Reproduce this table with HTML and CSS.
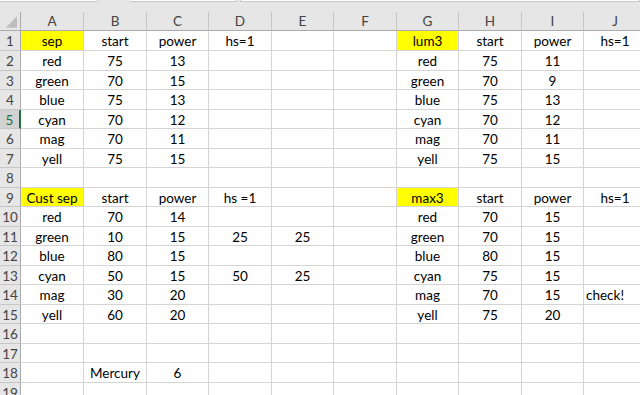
FILE: index.html
```html
<!DOCTYPE html>
<html>
<head>
<meta charset="utf-8">
<link rel="stylesheet" href="styles.css">
</head>
<body>
<div class="topstrip">
  <div class="fbox b1"></div>
  <div class="fbox b2"></div>
  <div class="fbox b3"></div>
</div>
<div class="sheet">
  <div class="corner"><svg width="21" height="19" viewBox="0 0 21 19"><polygon points="18,4 18,16 6,16" fill="#bdbdbd"/></svg></div>
  <div class="ch">A</div><div class="ch">B</div><div class="ch">C</div><div class="ch">D</div><div class="ch">E</div><div class="ch">F</div><div class="ch">G</div><div class="ch">H</div><div class="ch">I</div><div class="ch">J</div>

  <div class="rh">1</div><div class="c y">sep</div><div class="c">start</div><div class="c">power</div><div class="c">hs=1</div><div class="c"></div><div class="c"></div><div class="c y">lum3</div><div class="c">start</div><div class="c">power</div><div class="c">hs=1</div>
  <div class="rh">2</div><div class="c">red</div><div class="c">75</div><div class="c">13</div><div class="c"></div><div class="c"></div><div class="c"></div><div class="c">red</div><div class="c">75</div><div class="c">11</div><div class="c"></div>
  <div class="rh">3</div><div class="c">green</div><div class="c">70</div><div class="c">15</div><div class="c"></div><div class="c"></div><div class="c"></div><div class="c">green</div><div class="c">70</div><div class="c">9</div><div class="c"></div>
  <div class="rh">4</div><div class="c">blue</div><div class="c">75</div><div class="c">13</div><div class="c"></div><div class="c"></div><div class="c"></div><div class="c">blue</div><div class="c">75</div><div class="c">13</div><div class="c"></div>
  <div class="rh act">5</div><div class="c">cyan</div><div class="c">70</div><div class="c">12</div><div class="c"></div><div class="c"></div><div class="c"></div><div class="c">cyan</div><div class="c">70</div><div class="c">12</div><div class="c"></div>
  <div class="rh">6</div><div class="c">mag</div><div class="c">70</div><div class="c">11</div><div class="c"></div><div class="c"></div><div class="c"></div><div class="c">mag</div><div class="c">70</div><div class="c">11</div><div class="c"></div>
  <div class="rh">7</div><div class="c">yell</div><div class="c">75</div><div class="c">15</div><div class="c"></div><div class="c"></div><div class="c"></div><div class="c">yell</div><div class="c">75</div><div class="c">15</div><div class="c"></div>
  <div class="rh">8</div><div class="c"></div><div class="c"></div><div class="c"></div><div class="c"></div><div class="c"></div><div class="c"></div><div class="c"></div><div class="c"></div><div class="c"></div><div class="c"></div>
  <div class="rh">9</div><div class="c y">Cust sep</div><div class="c">start</div><div class="c">power</div><div class="c">hs =1</div><div class="c"></div><div class="c"></div><div class="c y">max3</div><div class="c">start</div><div class="c">power</div><div class="c">hs=1</div>
  <div class="rh">10</div><div class="c">red</div><div class="c">70</div><div class="c">14</div><div class="c"></div><div class="c"></div><div class="c"></div><div class="c">red</div><div class="c">70</div><div class="c">15</div><div class="c"></div>
  <div class="rh">11</div><div class="c">green</div><div class="c">10</div><div class="c">15</div><div class="c">25</div><div class="c">25</div><div class="c"></div><div class="c">green</div><div class="c">70</div><div class="c">15</div><div class="c"></div>
  <div class="rh">12</div><div class="c">blue</div><div class="c">80</div><div class="c">15</div><div class="c"></div><div class="c"></div><div class="c"></div><div class="c">blue</div><div class="c">80</div><div class="c">15</div><div class="c"></div>
  <div class="rh">13</div><div class="c">cyan</div><div class="c">50</div><div class="c">15</div><div class="c">50</div><div class="c">25</div><div class="c"></div><div class="c">cyan</div><div class="c">75</div><div class="c">15</div><div class="c"></div>
  <div class="rh">14</div><div class="c">mag</div><div class="c">30</div><div class="c">20</div><div class="c"></div><div class="c"></div><div class="c"></div><div class="c">mag</div><div class="c">70</div><div class="c">15</div><div class="c l">check!</div>
  <div class="rh">15</div><div class="c">yell</div><div class="c">60</div><div class="c">20</div><div class="c"></div><div class="c"></div><div class="c"></div><div class="c">yell</div><div class="c">75</div><div class="c">20</div><div class="c"></div>
  <div class="rh">16</div><div class="c"></div><div class="c"></div><div class="c"></div><div class="c"></div><div class="c"></div><div class="c"></div><div class="c"></div><div class="c"></div><div class="c"></div><div class="c"></div>
  <div class="rh">17</div><div class="c"></div><div class="c"></div><div class="c"></div><div class="c"></div><div class="c"></div><div class="c"></div><div class="c"></div><div class="c"></div><div class="c"></div><div class="c"></div>
  <div class="rh">18</div><div class="c"></div><div class="c">Mercury</div><div class="c">6</div><div class="c"></div><div class="c"></div><div class="c"></div><div class="c"></div><div class="c"></div><div class="c"></div><div class="c"></div>
  <div class="rh">19</div><div class="c"></div><div class="c"></div><div class="c"></div><div class="c"></div><div class="c"></div><div class="c"></div><div class="c"></div><div class="c"></div><div class="c"></div><div class="c"></div>
</div>
</body>
</html>
```
FILE: styles.css
```css
html, body {
  margin: 0;
  padding: 0;
  background: #ffffff;
  overflow: hidden;
  width: 640px;
  height: 395px;
}
body {
  font-family: "Lato", "Liberation Sans", sans-serif;
  font-size: 13.5px;
  color: #000;
}
.topstrip {
  height: 12px;
  background: #e6e6e6;
  display: flex;
  align-items: flex-start;
}
.fbox {
  height: 1px;
  background: #fff;
  border-bottom: 1px solid #c6c6c6;
  border-right: 1px solid #c6c6c6;
}
.b1 { width: 97px; }
.b2 { width: 106px; margin-left: 32px; }
.b3 { flex: 1; margin-left: 3px; border-left: 1px solid #c6c6c6; }
.sheet {
  display: grid;
  grid-template-columns: 21px 63px 63px 62px 63px 62px 63px 62px 63px 62px 63px;
  grid-template-rows: 19px 20px 20px repeat(8, 19px 20px) 20px;
  width: 647px;
}
.sheet > div {
  box-sizing: border-box;
  overflow: visible;
  white-space: nowrap;
}
.corner {
  background: #e6e6e6;
  border-right: 1px solid #ababab;
  border-bottom: 1px solid #ababab;
  display: flex;
}
.ch {
  background: #e6e6e6;
  border-right: 1px solid #c6c6c6;
  border-bottom: 1px solid #ababab;
  color: #444;
  text-align: center;
  line-height: 19px;
}
.rh {
  background: #e6e6e6;
  border-right: 1px solid #ababab;
  border-bottom: 1px solid #c6c6c6;
  color: #444;
  text-align: center;
  line-height: 20px;
}
.rh.act {
  background: #d2d2d2;
  color: #217346;
  border-right: 2px solid #217346;
}
.c {
  border-right: 1px solid #d4d4d4;
  border-bottom: 1px solid #d4d4d4;
  text-align: center;
  line-height: 20px;
}
.c.y {
  background: #ffff00;
}
.c.l {
  text-align: left;
  padding-left: 2px;
}
```
